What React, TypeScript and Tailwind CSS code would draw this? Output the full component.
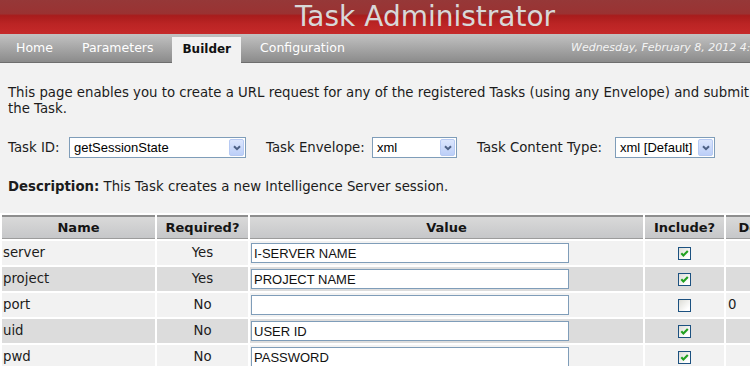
import React from "react";

type Row = { name: string; req: string; value: string; inc: boolean; def?: string };

const rows: Row[] = [
  { name: "server", req: "Yes", value: "I-SERVER NAME", inc: true },
  { name: "project", req: "Yes", value: "PROJECT NAME", inc: true },
  { name: "port", req: "No", value: "", inc: false, def: "0" },
  { name: "uid", req: "No", value: "USER ID", inc: true },
  { name: "pwd", req: "No", value: "PASSWORD", inc: true },
];

function Select({ text, className }: { text: string; className: string }) {
  return (
    <div
      className={`flex h-[21px] shrink-0 items-center border border-[#7f9db9] bg-white ${className}`}
    >
      <span className="flex-1 overflow-hidden whitespace-nowrap pl-[4px] font-['Liberation_Sans',Arial,sans-serif] text-[13px] leading-[17px] text-black">
        {text}
      </span>
      <span className="mr-[1px] flex h-[17px] w-[15px] items-center justify-center rounded-[2px] border border-[#b7caf3] bg-[linear-gradient(to_bottom,#dce6fd,#bccff8)]">
        <svg width="8" height="6" viewBox="0 0 8 6">
          <path d="M1 1.2 L4 4.2 L7 1.2" stroke="#4d6185" strokeWidth="2" fill="none" />
        </svg>
      </span>
    </div>
  );
}

function Check({ on }: { on: boolean }) {
  return (
    <span className="inline-flex h-[13px] w-[13px] items-center justify-center border border-[#1c5180] bg-[linear-gradient(135deg,#dcdcd6,#ffffff_80%)] align-middle">
      {on && (
        <svg width="11" height="11" viewBox="0 0 11 11">
          <path d="M2.3 5.2 L4.4 7.4 L8.8 2.9" stroke="#21a121" strokeWidth="2.1" fill="none" />
        </svg>
      )}
    </span>
  );
}

export default function App() {
  return (
    <div className="h-[366px] w-[750px] overflow-hidden bg-[#f2f2f2] font-['DejaVu_Sans',Verdana,sans-serif] text-[#1c1c1c]">
      <div className="w-[850px]">
        {/* Title bar */}
        <div className="h-[34px] bg-[linear-gradient(to_bottom,#963838_0%,#9a3232_40%,#a81c1c_46%,#bb2424_70%,#c52a2a_100%)] text-center text-[28px] leading-[34px] text-[#d8d8d8]">
          Task Administrator
        </div>

        {/* Nav */}
        <div className="flex h-[29px] border-b border-[#6e6e6e] bg-[linear-gradient(to_bottom,#c2c2c2,#8b8b8b)]">
          <div className="flex w-[571px] shrink-0 items-end gap-[9px] pl-[6px] text-[12.5px] text-white">
            <span className="h-[26px] px-[10px] leading-[24px]">Home</span>
            <span className="h-[26px] px-[10px] leading-[24px]">Parameters</span>
            <span className="-mb-px h-[26px] bg-[#f2f2f2] px-[10px] text-[12px] font-bold leading-[24px] text-[#111]">
              Builder
            </span>
            <span className="h-[26px] px-[10px] leading-[24px]">Configuration</span>
          </div>
          <div className="flex items-end">
            <span className="h-[26px] whitespace-nowrap text-[11px] italic leading-[24px] text-[#f4f4f4]">
              Wednesday, February 8, 2012 4:27:51 PM
            </span>
          </div>
        </div>

        {/* Body */}
        <div className="pl-[8px] pt-[22px] text-[13.3px] leading-[16px]">
          <p className="w-[760px]">
            This page enables you to create a URL request for any of the registered Tasks (using
            any Envelope) and submit the Task.
          </p>

          <div className="mt-[20px] flex items-center">
            <span className="w-[61px] shrink-0">Task ID:</span>
            <Select text="getSessionState" className="w-[177px]" />
            <span className="ml-[20px] w-[106px] shrink-0">Task Envelope:</span>
            <Select text="xml" className="w-[85px]" />
            <span className="ml-[20px] w-[138px] shrink-0">Task Content Type:</span>
            <Select text="xml [Default]" className="w-[100px]" />
          </div>

          <p className="mt-[21px]">
            <span className="font-bold">Description:</span> This Task creates a new Intelligence
            Server session.
          </p>
        </div>

        <table className="mt-[18px] table-fixed border-separate border-spacing-[2px] bg-white text-[13.3px]">
          <thead>
            <tr>
              {[
                ["Name", "w-[153px]"],
                ["Required?", "w-[91px]"],
                ["Value", "w-[393px]"],
                ["Include?", "w-[79px]"],
                ["Default", "w-[79px]"],
              ].map(([label, w]) => (
                <th
                  key={label}
                  className={`${w} h-[24px] border-t-2 border-b border-t-[#8e8e8e] border-b-[#9c9c9c] bg-[linear-gradient(to_bottom,#d9d9d9,#c6c7c9)] p-0 text-center text-[13px] font-bold leading-[19px] text-[#141414]`}
                >
                  {label}
                </th>
              ))}
            </tr>
          </thead>
          <tbody>
            {rows.map((r, i) => {
              const bg = i % 2 === 1 ? "bg-[#dcdcdc]" : "bg-[#f2f2f2]";
              return (
                <tr key={r.name}>
                  <td className={`${bg} h-[24px] p-0 pl-[1px] leading-[24px]`}>{r.name}</td>
                  <td className={`${bg} h-[24px] p-0 text-center leading-[24px]`}>{r.req}</td>
                  <td className={`${bg} h-[24px] p-0 pl-[1px]`}>
                    <input
                      readOnly
                      value={r.value}
                      className="block h-[20px] w-[318px] border border-[#7f9db9] bg-white pl-[2px] font-['Liberation_Sans',Arial,sans-serif] text-[13px] text-[#111] outline-none"
                    />
                  </td>
                  <td className={`${bg} h-[24px] p-0 text-center`}>
                    <Check on={r.inc} />
                  </td>
                  <td className={`${bg} h-[24px] p-0 pl-[2px] leading-[24px]`}>{r.def ?? ""}</td>
                </tr>
              );
            })}
          </tbody>
        </table>
      </div>
    </div>
  );
}
